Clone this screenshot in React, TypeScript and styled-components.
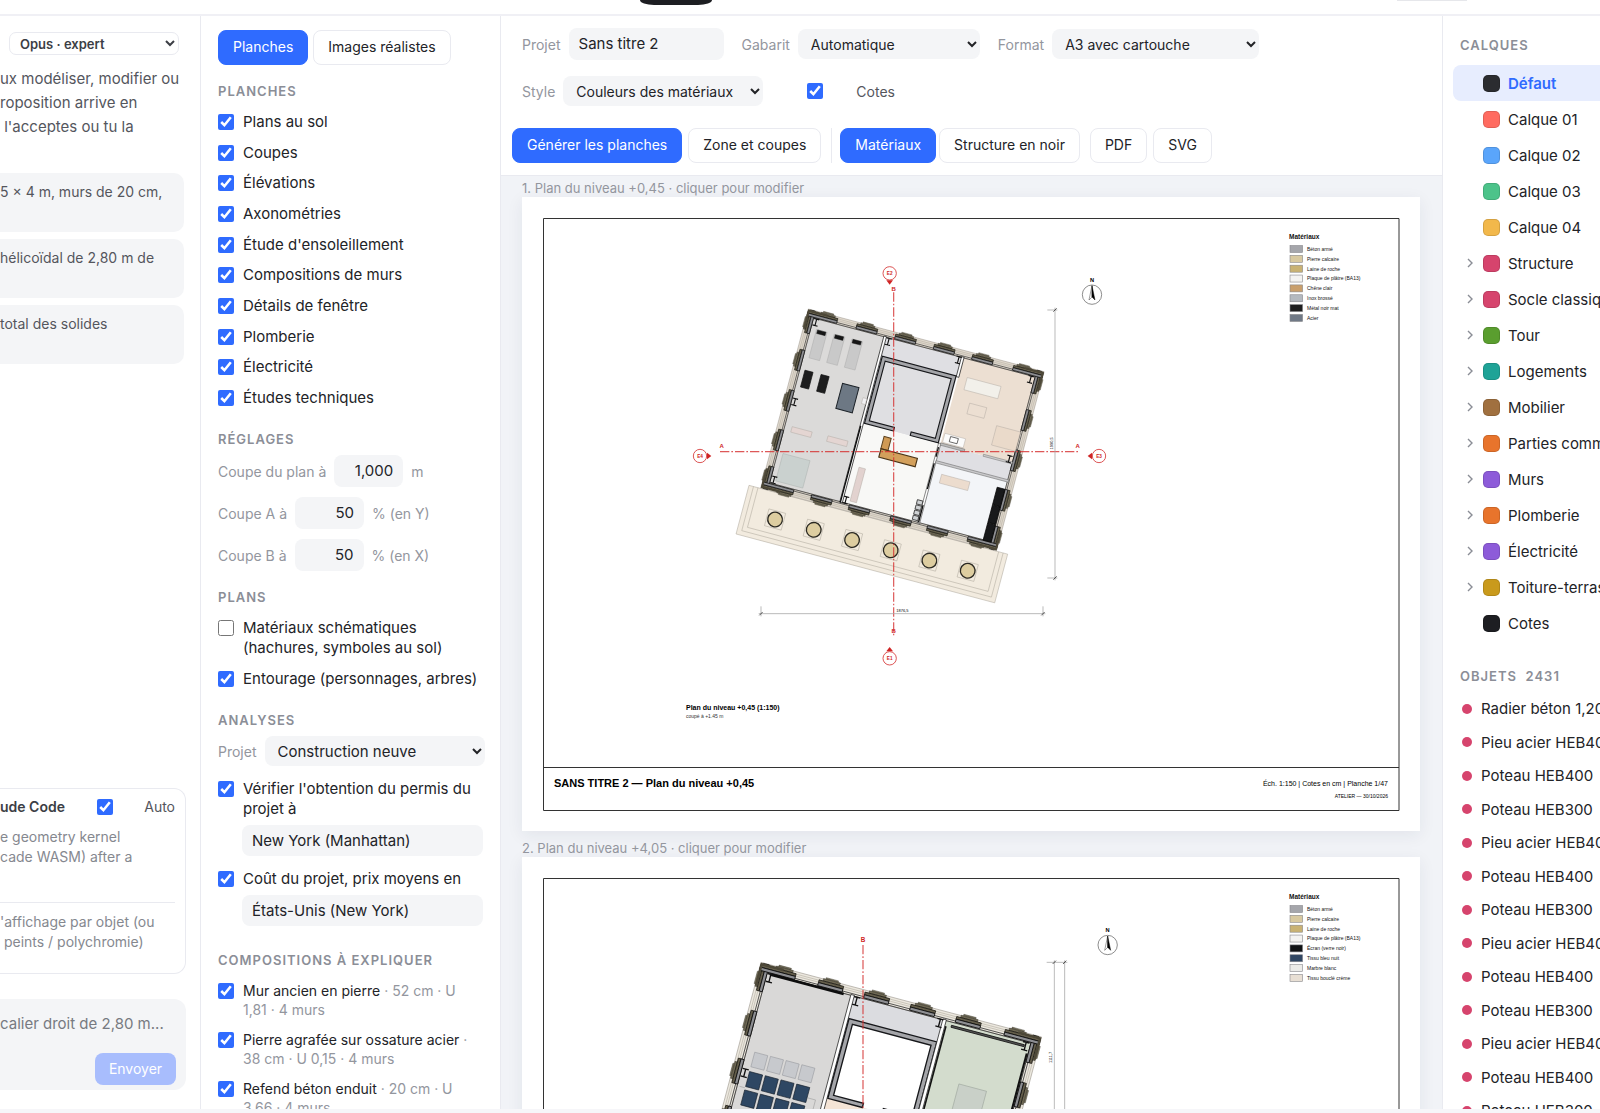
import React from "react";
import styled, { createGlobalStyle } from "styled-components";

const c = {
  blue: "#2f6bff",
  ink: "#222327",
  mid: "#54565d",
  mute: "#93969e",
  field: "#f4f5f7",
  line: "#e9eaf0",
  desk: "#f1f3f7",
};

const Global = createGlobalStyle`
  * { box-sizing: border-box; }
  body { margin: 0; background: #fff; }
  body, button, input, select, textarea { font-family: Inter, "Liberation Sans", sans-serif; }
`;

/* ---------- shell ---------- */

const Shell = styled.div`
  display: flex;
  flex-direction: column;
  height: 100vh;
  overflow: hidden;
  color: ${c.ink};
  font-size: 15px;
  border-bottom: 4px solid #f6f6f9;
`;

const TopBar = styled.header`
  display: flex;
  align-items: flex-start;
  height: 16px;
  padding: 0 133px 0 40%;
  border-bottom: 2px solid #f0f0f5;
  flex: none;
`;

const DarkPill = styled.span`
  width: 72px;
  height: 5px;
  border-radius: 0 0 14px 14px / 0 0 5px 5px;
  background: #1d1e22;
`;

const PalePill = styled.span`
  width: 70px;
  height: 1px;
  margin-left: auto;
  background: #e6e7eb;
`;

const Columns = styled.main`
  display: grid;
  grid-template-columns: 201px 300px minmax(0, 1fr) 157px;
  flex: 1;
  min-height: 0;
`;

const Column = styled.section`
  min-height: 0;
  overflow: hidden;
  border-right: 1px solid ${c.line};
`;

const Heading = styled.h2`
  margin: 18px 0 8px;
  font-size: 13px;
  line-height: 16px;
  font-weight: 600;
  letter-spacing: 1px;
  text-transform: uppercase;
  white-space: nowrap;
  color: #8b8e97;
`;

const Button = styled.button<{ $on?: boolean }>`
  height: 35px;
  padding: 0 14px 2px;
  border: 1px solid ${(p) => (p.$on ? c.blue : c.line)};
  border-radius: 8px;
  background: ${(p) => (p.$on ? c.blue : "#fff")};
  color: ${(p) => (p.$on ? "#fff" : c.ink)};
  font-size: 14px;
  white-space: nowrap;
`;

const Tick = styled.input.attrs({ type: "checkbox" })`
  flex: none;
  width: 16px;
  height: 16px;
  margin: 0;
  accent-color: ${c.blue};
`;

const Select = styled.select<{ $w: number; $small?: boolean }>`
  width: ${(p) => p.$w}px;
  height: 30px;
  padding: 0 0 0 9px;
  border: 0;
  border-radius: 8px;
  background-color: ${c.field};
  color: ${c.ink};
  font-size: ${(p) => (p.$small ? "14px" : "15px")};
`;

const TextField = styled.input<{ $w?: number; $end?: boolean }>`
  width: ${(p) => (p.$w ? p.$w + "px" : "100%")};
  height: 32px;
  padding: 0 10px 2px;
  border: 0;
  border-radius: 8px;
  background: ${c.field};
  color: ${c.ink};
  font-size: 15px;
  text-align: ${(p) => (p.$end ? "right" : "left")};
`;

/* ---------- assistant column ---------- */

const Assistant = styled(Column)`
  display: flex;
  flex-direction: column;
  padding: 16px 14px 19px 0;
  color: ${c.mid};
`;

const ModelSelect = styled.select`
  width: 170px;
  height: 23px;
  margin-left: 9px;
  padding: 0 0 0 6px;
  border: 1px solid ${c.line};
  border-radius: 7px;
  background-color: #fff;
  color: #3c3e45;
  font-size: 13px;
  font-weight: 600;
  flex: none;
`;

const Intro = styled.p`
  margin: 12px 0 34px;
  line-height: 24px;
  white-space: pre;
`;

const Examples = styled.div`
  display: grid;
  gap: 7px;
  margin-right: 2px;
`;

const Example = styled.button`
  display: flex;
  align-items: flex-start;
  height: 59px;
  padding: 10px 0;
  border: 0;
  border-radius: 0 10px 10px 0;
  background: ${c.field};
  color: ${c.mid};
  font-size: 14px;
  line-height: 18px;
  white-space: nowrap;
`;

const ToolCard = styled.div`
  height: 186px;
  margin-top: auto;
  padding: 8px 10px 0 0;
  border: 1px solid ${c.line};
  border-left: 0;
  border-radius: 0 12px 12px 0;
  font-size: 14px;
  line-height: 20px;
  flex: none;
`;

const ToolHead = styled.div`
  display: flex;
  align-items: center;
  justify-content: space-between;
  margin-bottom: 10px;
`;

const Strong = styled.strong`
  font-weight: 600;
  color: #3c3e45;
`;

const Note = styled.p<{ $rule?: boolean }>`
  margin: 0;
  height: ${(p) => (p.$rule ? "60px" : "75px")};
  padding-top: ${(p) => (p.$rule ? "9px" : "0")};
  border-top: ${(p) => (p.$rule ? `1px solid ${c.line}` : "0")};
  color: #85888f;
  white-space: pre;
`;

const Composer = styled.div`
  display: flex;
  flex-direction: column;
  align-items: flex-end;
  justify-content: space-between;
  height: 91px;
  margin-top: 25px;
  padding: 14px 10px 5px 0;
  border-radius: 0 12px 12px 0;
  background: ${c.field};
  flex: none;
`;

const Prompt = styled.input`
  width: 100%;
  padding: 0;
  border: 0;
  background: transparent;
  font-size: 15px;
  line-height: 22px;
  &::placeholder {
    color: #777a81;
  }
`;

const Send = styled.button`
  height: 32px;
  width: 81px;
  padding: 0 0 2px;
  border: 0;
  border-radius: 8px;
  background: #a8bdfd;
  color: #fff;
  font-size: 14px;
`;

/* ---------- settings column ---------- */

const Settings = styled(Column)`
  padding: 14px 14px 0 17px;
`;

const Tabs = styled.div`
  display: flex;
  gap: 5px;
`;

const CheckList = styled.div<{ $spread?: boolean }>`
  display: flex;
  flex-direction: column;
  justify-content: space-between;
  gap: ${(p) => (p.$spread ? "0" : "1px")};
  min-height: ${(p) => (p.$spread ? "306px" : "0")};
`;

const CheckRow = styled.label<{ $small?: boolean }>`
  display: flex;
  gap: 9px;
  padding: 5px ${(p) => (p.$small ? "6px" : "0")} 5px 0;
  font-size: ${(p) => (p.$small ? "14px" : "15px")};
  line-height: ${(p) => (p.$small ? "19px" : "20px")};
  & > input {
    margin-top: 2px;
  }
`;

const Detail = styled.span`
  color: ${c.mute};
`;

const Stack = styled.div`
  display: grid;
  gap: 10px;
`;

const Inline = styled.label`
  display: flex;
  align-items: center;
  gap: 8px;
  color: ${c.mute};
  font-size: 14px;
  white-space: nowrap;
`;

const Groups = styled.div`
  display: grid;
  gap: 8px;
  padding: 8px 0;
`;

const Indent = styled.div`
  margin-top: 1px;
  padding: 0 3px 0 24px;
  & > input {
    height: 31px;
    padding-bottom: 0;
  }
`;

/* ---------- sheets column ---------- */

const Sheets = styled(Column)`
  display: flex;
  flex-direction: column;
`;

const ToolArea = styled.div`
  display: grid;
  gap: 16px;
  padding: 12px 11px;
  border-bottom: 1px solid ${c.line};
  flex: none;
`;

const FieldRow = styled.div`
  display: flex;
  flex-wrap: wrap;
  gap: 16px 18px;
  padding: 0 10px;
`;

const CotesRow = styled.label`
  display: flex;
  align-items: center;
  gap: 33px;
  margin-left: 26px;
  color: ${c.mid};
  font-size: 14px;
`;

const ButtonRow = styled.div`
  display: flex;
  gap: 6px;
  padding-top: 6px;
`;

const Pair = styled.div`
  display: flex;
  gap: 3px;
  margin: 0 4px;
  padding-left: 8px;
  border-left: 1px solid ${c.line};
`;

const Desk = styled.div`
  flex: 1;
  min-height: 0;
  overflow: hidden;
  padding: 3px 22px 0 21px;
  background: ${c.desk};
`;

const Sheet = styled.figure`
  margin: 0 0 8px;
`;

const Caption = styled.figcaption`
  color: ${c.mute};
  font-size: 13px;
  line-height: 18px;
`;

const Paper = styled.svg`
  display: block;
  width: 100%;
  background: #fff;
  box-shadow: 0 4px 16px rgba(30, 40, 70, 0.07);
  font-family: "Liberation Sans", Arial, sans-serif;
`;

/* ---------- layers column ---------- */

const Layers = styled(Column)`
  border-right: 0;
  padding: 4px 0 0 10px;
`;

const SideHeading = styled(Heading)`
  padding-left: 7px;
  &:first-child {
    margin: 17px 0 12px;
  }
`;

const LayerList = styled.ul`
  margin: 0 0 27px;
  padding: 0;
  list-style: none;
`;

const Layer = styled.li<{ $on?: boolean }>`
  display: flex;
  align-items: center;
  gap: 8px;
  height: 36px;
  padding-left: 13px;
  border-radius: 8px 0 0 8px;
  background: ${(p) => (p.$on ? "#e7edfe" : "transparent")};
  color: ${(p) => (p.$on ? c.blue : c.ink)};
  font-weight: ${(p) => (p.$on ? 600 : 400)};
  white-space: nowrap;
`;

const Swatch = styled.span<{ $c: string }>`
  flex: none;
  width: 17px;
  height: 17px;
  border: 1px solid rgba(0, 0, 0, 0.12);
  border-radius: 5px;
  background: ${(p) => p.$c};
`;

const Chevron = styled.svg`
  flex: none;
  width: 9px;
  height: 10px;
  fill: none;
  stroke: #8a8d95;
  stroke-width: 1.4;
`;

const ObjectList = styled.ul`
  display: grid;
  grid-auto-rows: 1fr;
  min-height: 469px;
  margin: 0;
  padding: 0;
  list-style: none;
`;

const ObjectRow = styled.li`
  display: flex;
  align-items: center;
  gap: 9px;
  padding-left: 9px;
  white-space: nowrap;
  &::before {
    content: "";
    width: 10px;
    height: 10px;
    border-radius: 50%;
    background: #d6446d;
  }
`;

/* ---------- drawing ---------- */

type RectSpec = [number, number, number, number, string];

// rectangle given by its centre
const Box = ({ r, s = "#a9a39c", w = 1.2 }: { r: RectSpec; s?: string; w?: number }) => (
  <rect x={r[0] - r[2] / 2} y={r[1] - r[3] / 2} width={r[2]} height={r[3]} fill={r[4]} stroke={s} strokeWidth={w} />
);

const Pilaster = ({ at, turn, len = 64, shift = 0 }: { at: [number, number]; turn: number; len?: number; shift?: number }) => (
  <g transform={`translate(${at[0]} ${at[1]}) rotate(${turn})`}>
    <rect x={-16} y={-5} width={32} height={4} fill="#7a745f" stroke="#3a372c" strokeWidth="1" />
    <rect x={-22} y={-1} width={44} height={6} fill="#6f6954" stroke="#2a2820" strokeWidth="1" />
    <rect x={-len / 2 + shift} y={5} width={len} height={7} fill="#645e4b" stroke="#16150f" strokeWidth="1.8" />
    <rect x={-len / 2 + shift} y={12} width={len} height={8} fill="#8d8e92" stroke="#111" strokeWidth="2.2" />
  </g>
);

const Beam = ({ x, y }: { x: number; y: number }) => (
  <path d={`M${x - 8} ${y - 10}h16M${x - 8} ${y + 10}h16M${x} ${y - 10}v20`} stroke="#111" strokeWidth="3.4" fill="none" />
);

const TOPS = [185, 305, 425, 544];
const FOOTS = [185, 302, 431, 545];
const SIDES = [155, 280, 403];

const Envelope = ({ band }: { band: string }) => (
  <g>
    <path
      d="M0 0H732V556H0ZM22 22V534H710V22Z"
      fillRule="evenodd"
      fill={band}
      stroke="#8b867b"
      strokeWidth="1.2"
    />
    <path d="M6 6H726V550H6ZM11 11H721V545H11Z" fill="none" stroke="#a9a295" strokeWidth="1.2" />
    <path d="M17 17H715V539H17ZM22 22H710V534H22Z" fill="none" stroke="#2a2a2a" strokeWidth="1.8" />
    {TOPS.map((u) => <Pilaster key={u} at={[u, 0]} turn={0} />)}
    {FOOTS.map((u) => <Pilaster key={u} at={[u, 556]} turn={180} />)}
    {SIDES.map((v) => <Pilaster key={v} at={[2, v]} turn={-90} />)}
    {SIDES.map((v) => <Pilaster key={v} at={[730, v]} turn={90} />)}
    <Pilaster at={[2, 40]} turn={-90} len={70} shift={4} />
    <Pilaster at={[2, 516]} turn={-90} len={70} shift={-4} />
    <Pilaster at={[730, 40]} turn={90} len={70} shift={-4} />
    <Pilaster at={[730, 516]} turn={90} len={70} shift={4} />
    <Pilaster at={[62, 0]} turn={0} len={92} shift={-15} />
    <Pilaster at={[670, 0]} turn={0} len={92} shift={15} />
    <Pilaster at={[72, 556]} turn={180} len={96} shift={22} />
    <Pilaster at={[670, 556]} turn={180} len={92} shift={-15} />
    <path d="M3 60V4H60M672 4H729V60M3 496V552H60M672 552H729V496" fill="none" stroke="#4d4838" strokeWidth="6" />
  </g>
);

const Core = ({ floor }: { floor: string }) => (
  <g>
    <rect x={251} y={80} width={229} height={208} fill={floor} />
    <path
      d="M341 288H251V80H480V288H393V277H468V92H263V277H341Z"
      fill="#a4a5a9"
      stroke="#16171a"
      strokeWidth="3.4"
    />
  </g>
);

const Beams = () => (
  <g>
    <Beam x={32} y={33} />
    <Beam x={257} y={33} />
    <Beam x={474} y={32} />
    <Beam x={698} y={33} />
    <Beam x={32} y={280} />
    <Beam x={32} y={522} />
    <Beam x={698} y={280} />
    <Beam x={256} y={525} />
  </g>
);

const LevelOne = () => (
  <g>
    <g fill="#f2ebdf" stroke="#aaa498" strokeWidth="1.4">
      <rect x={-36} y={557} width={803} height={151} />
      <path d="M-22 557V694H753V557M-8 557V680H739V557" fill="none" />
    </g>
    {[66, 186, 305, 425, 545, 664].map((u) => (
      <g key={u}>
        <Box r={[u, 636, 52, 52, "none"]} s="#aaa498" w={1.4} />
        <circle cx={u} cy={636} r={22} fill="#ddcda0" stroke="#2b2922" strokeWidth="4" />
      </g>
    ))}
    <rect x={20} y={20} width={225} height={516} fill="#dbdad9" />
    <rect x={245} y={20} width={238} height={270} fill="#dfdfe3" />
    <rect x={245} y={288} width={238} height={248} fill="#f8f8f6" />
    <rect x={487} y={20} width={226} height={270} fill="#ecdfd2" />
    <rect x={487} y={290} width={226} height={54} fill="#dfdfe3" />
    <rect x={487} y={344} width={226} height={192} fill="#f3f5f8" />
    <Envelope band="#e0d9ce" />
    <rect x={240} y={20} width={8} height={516} fill="#fff" stroke="#111" strokeWidth="2" />
    <rect x={240} y={298} width={4} height={238} fill="#0c0c0c" />
    <rect x={481} y={20} width={8} height={62} fill="#fff" stroke="#111" strokeWidth="2" />
    <rect x={481} y={288} width={7} height={248} fill="#fff" stroke="#333" strokeWidth="1.6" />
    <path d="M484 300v30M484 350v80M484 480v54" stroke="#111" strokeWidth="4" />
    <Core floor="#dfdfe2" />
    <rect x={487} y={286} width={75} height={7} fill="#bbb" stroke="#666" strokeWidth="1.5" />
    <rect x={620} y={286} width={90} height={6} fill="#ccc" stroke="#777" strokeWidth="1.5" />
    <rect x={487} y={341} width={226} height={7} fill="#c9c9cb" stroke="#666" strokeWidth="1.5" />
    {[56, 111, 166].map((u) => (
      <g key={u}>
        <Box r={[u, 97, 33, 88, "#c9c9c9"]} s="#a5a5a5" />
        <Box r={[u, 59, 26, 11, "#161616"]} s="#161616" />
      </g>
    ))}
    <Box r={[50, 206, 25, 52, "#1d1d1e"]} s="#111" w={2} />
    <Box r={[100, 206, 25, 52, "#1d1d1e"]} s="#111" w={2} />
    <Box r={[182, 228, 51, 78, "#6d7884"]} s="#1c2228" w={3} />
    <Box r={[233, 224, 12, 18, "#f2f2f4"]} />
    <Box r={[75, 362, 62, 17, "#e4d5d2"]} />
    <Box r={[186, 361, 62, 17, "#e4d5d2"]} />
    <Box r={[80, 481, 84, 85, "#cad1cf"]} s="#a3aaa8" />
    <Box r={[329, 330, 22, 38, "#cf9a55"]} s="#5a3f1c" w={3} />
    <Box r={[375, 362, 113, 26, "#d3a05c"]} s="#4a3417" w={3.4} />
    <Box r={[279, 472, 20, 105, "#e2d2cf"]} />
    {[475, 491, 507, 523].map((v) => <Box key={v} r={[472, v, 17, 13, "#cfd2d4"]} s="#333" w={2.4} />)}
    <Box r={[566, 95, 105, 38, "#f2f0ea"]} />
    <Box r={[567, 165, 53, 33, "#ecdfd2"]} />
    <Box r={[673, 223, 74, 60, "#eadaca"]} />
    <Box r={[524, 269, 64, 28, "#fbfbfb"]} />
    <Box r={[523, 268, 24, 16, "#fff"]} s="#333" w={2} />
    <Box r={[558, 390, 88, 27, "#ecdcce"]} />
    {[398, 453, 508].map((v) => <Box key={v} r={[697, v, 24, 54, "#18191b"]} s="#000" w={2} />)}
    <Beams />
  </g>
);

const LevelTwo = () => (
  <g>
    <rect x={20} y={20} width={225} height={516} fill="#d9d8d7" />
    <rect x={245} y={20} width={238} height={270} fill="#dbdce0" />
    <rect x={245} y={288} width={238} height={248} fill="#f4e4d6" />
    <rect x={487} y={20} width={226} height={516} fill="#d3dccd" />
    <Envelope band="#ece8df" />
    <rect x={30} y={20} width={192} height={7} fill="#0d0d0d" />
    <rect x={240} y={20} width={9} height={516} fill="#fff" stroke="#222" strokeWidth="1.8" />
    <Core floor="#fff" />
    <rect x={480} y={20} width={9} height={516} fill="#fff" stroke="#222" strokeWidth="1.8" />
    <rect x={490} y={36} width={4} height={500} fill="#111" />
    <rect x={505} y={30} width={190} height={5} fill="#555" stroke="#111" strokeWidth="2" />
    <rect x={704} y={50} width={5} height={480} fill="#111" />
    {[60, 101, 142, 183].map((u) => (
      <g key={u}>
        <Box r={[u, 242, 34, 38, "#c7c9cd"]} s="#8f9196" />
        <Box r={[u, 293, 34, 39, "#2e4763"]} s="#16202c" w={1.6} />
        <Box r={[u, 341, 34, 39, "#2e4763"]} s="#16202c" w={1.6} />
      </g>
    ))}
    <path d="M28 316H42M202 300H222V380" fill="none" stroke="#9b9b9b" strokeWidth="1.4" />
    <rect x={561} y={168} width={72} height={80} fill="#c9d0c8" stroke="#9aa39a" strokeWidth="1.4" />
    <Beams />
  </g>
);

const North = ({ x, y }: { x: number; y: number }) => (
  <g>
    <text x={x} y={y - 39} fontSize="17" fontWeight="700" textAnchor="middle">N</text>
    <circle cx={x} cy={y} r={29} fill="#fff" stroke="#555" strokeWidth="2" />
    <path d={`M${x} ${y - 27}L${x - 9} ${y + 16}L${x} ${y + 7}Z`} fill="#fff" stroke="#333" strokeWidth="1.4" />
    <path d={`M${x} ${y - 27}L${x + 9} ${y + 16}L${x} ${y + 7}Z`} fill="#000" stroke="#000" strokeWidth="1.4" />
  </g>
);

const Mark = ({ x, y, turn, name }: { x: number; y: number; turn: number; name: string }) => (
  <g fill="#cf2424">
    <circle cx={x} cy={y} r={20} fill="#fff" stroke="#d63a3a" strokeWidth="2.6" />
    <path d="M-10 21H10L0 34Z" transform={`translate(${x} ${y}) rotate(${turn})`} />
    <text x={x} y={y + 5} fontSize="14" fontWeight="700" textAnchor="middle">{name}</text>
  </g>
);

const RED = { stroke: "#d62f2f", strokeWidth: 3.6, strokeDasharray: "28 6 5 6", opacity: 0.8 };

type Mat = [string, string];

const Legend = ({ y, items }: { y: number; items: Mat[] }) => (
  <g fill="#111">
    <text x={1289} y={y + 2} fontSize="6.5" fontWeight="700">Matériaux</text>
    {items.map(([name, fill], i) => (
      <g key={name} transform={`translate(1290 ${y + 12 + i * 9.85})`}>
        <rect y={-3.5} width={12.6} height={7} fill={fill} stroke="#88888c" strokeWidth=".6" />
        <text x={17} y={1.8} fontSize="5">{name}</text>
      </g>
    ))}
  </g>
);

const Frame = ({ y, title }: { y: number; title: string }) => (
  <g>
    <path d={`M543.5 ${y + 21.5}H1399V${y + 613.5}H543.5ZM543.5 ${y + 570.5}H1399`} fill="none" stroke="#333" strokeWidth="1" />
    <text x={554} y={y + 590} fontSize="11" fontWeight="700">{title}</text>
  </g>
);

const MATS_ONE: Mat[] = [
  ["Béton armé", "#a5a6ab"], ["Pierre calcaire", "#d8c9a0"], ["Laine de roche", "#c9b273"],
  ["Plaque de plâtre (BA13)", "#f4f3f1"], ["Chêne clair", "#c99f6c"], ["Inox brossé", "#b4b9bf"],
  ["Métal noir mat", "#1f1f20"], ["Acier", "#707986"],
];

const MATS_TWO: Mat[] = [
  ["Béton armé", "#a5a6ab"], ["Pierre calcaire", "#d8c9a0"], ["Laine de roche", "#c9b273"],
  ["Plaque de plâtre (BA13)", "#f4f3f1"], ["Écran (verre noir)", "#101214"], ["Tissu bleu nuit", "#314763"],
  ["Marbre blanc", "#ebebe8"], ["Tissu bouclé crème", "#e8dfd4"],
];

const SheetOne = () => (
  <Paper viewBox="522 198 898 634" role="img" aria-label="Plan du niveau +0,45">
    <Frame y={198} title="SANS TITRE 2 — Plan du niveau +0,45" />
    <text x={1388} y={787} fontSize="7" textAnchor="end">Éch. 1:150 | Cotes en cm | Planche 1/47</text>
    <text x={1388} y={799} fontSize="5" textAnchor="end">ATELIER — 30/10/2026</text>
    <text x={686} y={711} fontSize="7" fontWeight="700">Plan du niveau +0,45 (1:150)</text>
    <text x={686} y={719} fontSize="5" fill="#333">coupé à +1.45 m</text>
    <Legend y={238} items={MATS_ONE} />
    <g transform="translate(670 250) scale(.33333)">
      <g transform="translate(415 180) rotate(14.9)"><LevelOne /></g>
      <path d="M150 608H1226" {...RED} />
      <path d="M671 130V1165" {...RED} />
      <g fill="#cf2424" fontSize="18" fontWeight="700" textAnchor="middle">
        <text x={155} y={598}>A</text>
        <text x={1223} y={598}>A</text>
        <text x={671} y={126}>B</text>
        <text x={671} y={1153}>B</text>
      </g>
      <Mark x={659} y={73} turn={0} name="E2" />
      <Mark x={659} y={1228} turn={180} name="E1" />
      <Mark x={90} y={621} turn={-90} name="E4" />
      <Mark x={1287} y={621} turn={90} name="E3" />
      <North x={1266} y={137} />
      <g stroke="#aaa" strokeWidth="2.4" fill="none">
        <path d="M266 1094H1126M273 1072V1102M1119 1072V1102" />
        <path d="M1155 176V994M1132 183H1162M1132 987H1162" />
        <path d="M268 1099l10-10M1114 1099l10-10M1150 188l10-10M1150 992l10-10" stroke="#333" />
      </g>
      <text x={697} y={1089} fontSize="12" textAnchor="middle">1876,5</text>
      <text transform="translate(1150 583) rotate(-90)" fontSize="12" textAnchor="middle">1990,5</text>
    </g>
  </Paper>
);

const SheetTwo = () => (
  <Paper viewBox="522 858 898 634" role="img" aria-label="Plan du niveau +4,05">
    <Frame y={858} title="SANS TITRE 2 — Plan du niveau +4,05" />
    <Legend y={898} items={MATS_TWO} />
    <g transform="translate(680 900) scale(.33333)">
      <g transform="translate(243 190) rotate(14.9) scale(1.19)"><LevelTwo /></g>
      <path d="M549 138V1300" {...RED} />
      <text x={549} y={128} fontSize="19" fontWeight="700" fill="#cf2424" textAnchor="middle">B</text>
      <North x={1283} y={138} />
      <g stroke="#aaa" strokeWidth="2.4" fill="none">
        <path d="M1123 184V1200M1154 184V1200M1100 190H1162" />
        <path d="M1118 195l10-10M1149 195l10-10" stroke="#333" />
      </g>
      <text transform="translate(1117 475) rotate(-90)" fontSize="12" textAnchor="middle">1111,7</text>
    </g>
  </Paper>
);

/* ---------- data ---------- */

const PLANCHES = [
  "Plans au sol", "Coupes", "Élévations", "Axonométries", "Étude d'ensoleillement",
  "Compositions de murs", "Détails de fenêtre", "Plomberie", "Électricité", "Études techniques",
];

const COUPES = [
  ["Coupe du plan à", "1,000", "m"],
  ["Coupe A à", "50", "% (en Y)"],
  ["Coupe B à", "50", "% (en X)"],
];

const MURS = [
  ["Mur ancien en pierre", "52 cm · U 1,81 · 4 murs"],
  ["Pierre agrafée sur ossature acier", "38 cm · U 0,15 · 4 murs"],
  ["Refend béton enduit", "20 cm · U 3,66 · 4 murs"],
];

const CALQUES: [string, string, boolean][] = [
  ["Défaut", "#2b2c30", false], ["Calque 01", "#ff6b60", false], ["Calque 02", "#5aa5fb", false],
  ["Calque 03", "#4cc38a", false], ["Calque 04", "#f2b84b", false], ["Structure", "#d6446d", true],
  ["Socle classique", "#d6446d", true], ["Tour", "#5a9e2f", true], ["Logements", "#1fa397", true],
  ["Mobilier", "#a0703f", true], ["Parties communes", "#e8742c", true], ["Murs", "#8d5bd9", true],
  ["Plomberie", "#e8742c", true], ["Électricité", "#8d5bd9", true], ["Toiture-terrasse", "#c99a1c", true],
  ["Cotes", "#1d1e22", false],
];

const OBJETS = [
  "Radier béton 1,20 m", "Pieu acier HEB400", "Poteau HEB400", "Poteau HEB300", "Pieu acier HEB400",
  "Poteau HEB400", "Poteau HEB300", "Pieu acier HEB400", "Poteau HEB400", "Poteau HEB300",
  "Pieu acier HEB400", "Poteau HEB400", "Poteau HEB300", "Pieu acier HEB400",
];

export default function App() {
  return (
    <>
      <Global />
      <Shell>
        <TopBar>
          <DarkPill />
          <PalePill />
        </TopBar>
        <Columns>
          <Assistant>
            <ModelSelect aria-label="Modèle">
              <option>Opus · expert</option>
            </ModelSelect>
            <Intro>{"ux modéliser, modifier ou\nroposition arrive en\n l'acceptes ou tu la"}</Intro>
            <Examples>
              <Example>5 × 4 m, murs de 20 cm,</Example>
              <Example>hélicoïdal de 2,80 m de</Example>
              <Example>total des solides</Example>
            </Examples>
            <ToolCard>
              <ToolHead>
                <Strong>ude Code</Strong>
                <Tick defaultChecked id="auto" />
                <label htmlFor="auto">Auto</label>
              </ToolHead>
              <Note>{"e geometry kernel\ncade WASM) after a"}</Note>
              <Note $rule>{"'affichage par objet (ou\n peints / polychromie)"}</Note>
            </ToolCard>
            <Composer>
              <Prompt aria-label="Message" placeholder="calier droit de 2,80 m..." />
              <Send>Envoyer</Send>
            </Composer>
          </Assistant>

          <Settings>
            <Tabs>
              <Button $on>Planches</Button>
              <Button>Images réalistes</Button>
            </Tabs>
            <Heading>Planches</Heading>
            <CheckList $spread>
              {PLANCHES.map((name) => (
                <CheckRow key={name}>
                  <Tick defaultChecked />
                  <span>{name}</span>
                </CheckRow>
              ))}
            </CheckList>
            <Heading>Réglages</Heading>
            <Stack>
              {COUPES.map(([name, value, unit]) => (
                <Inline key={name}>
                  {name}
                  <TextField $w={69} $end defaultValue={value} />
                  {unit}
                </Inline>
              ))}
            </Stack>
            <Heading>Plans</Heading>
            <CheckList>
              <CheckRow>
                <Tick />
                <span>Matériaux schématiques (hachures, symboles au sol)</span>
              </CheckRow>
              <CheckRow>
                <Tick defaultChecked />
                <span>Entourage (personnages, arbres)</span>
              </CheckRow>
            </CheckList>
            <Heading>Analyses</Heading>
            <Inline>
              Projet
              <Select $w={220}>
                <option>Construction neuve</option>
              </Select>
            </Inline>
            <Groups>
              <div>
                <CheckRow>
                  <Tick defaultChecked />
                  <span>Vérifier l'obtention du permis du projet à</span>
                </CheckRow>
                <Indent>
                  <TextField aria-label="Ville du permis" defaultValue="New York (Manhattan)" />
                </Indent>
              </div>
              <div>
                <CheckRow>
                  <Tick defaultChecked />
                  <span>Coût du projet, prix moyens en</span>
                </CheckRow>
                <Indent>
                  <TextField aria-label="Pays des prix" defaultValue="États-Unis (New York)" />
                </Indent>
              </div>
            </Groups>
            <Heading>Compositions à expliquer</Heading>
            <CheckList>
              {MURS.map(([name, detail]) => (
                <CheckRow key={name} $small>
                  <Tick defaultChecked />
                  <span>
                    {name} <Detail>· {detail}</Detail>
                  </span>
                </CheckRow>
              ))}
            </CheckList>
          </Settings>

          <Sheets>
            <ToolArea>
              <FieldRow>
                <Inline>
                  Projet
                  <TextField $w={155} defaultValue="Sans titre 2" />
                </Inline>
                <Inline>
                  Gabarit
                  <Select $small $w={182}>
                    <option>Automatique</option>
                  </Select>
                </Inline>
                <Inline>
                  Format
                  <Select $small $w={207}>
                    <option>A3 avec cartouche</option>
                  </Select>
                </Inline>
              </FieldRow>
              <FieldRow>
                <Inline>
                  Style
                  <Select $small $w={200}>
                    <option>Couleurs des matériaux</option>
                  </Select>
                </Inline>
                <CotesRow>
                  <Tick defaultChecked />
                  Cotes
                </CotesRow>
              </FieldRow>
              <ButtonRow>
                <Button $on>Générer les planches</Button>
                <Button>Zone et coupes</Button>
                <Pair>
                  <Button $on>Matériaux</Button>
                  <Button>Structure en noir</Button>
                </Pair>
                <Button>PDF</Button>
                <Button>SVG</Button>
              </ButtonRow>
            </ToolArea>
            <Desk>
              <Sheet>
                <Caption>1. Plan du niveau +0,45 · cliquer pour modifier</Caption>
                <SheetOne />
              </Sheet>
              <Sheet>
                <Caption>2. Plan du niveau +4,05 · cliquer pour modifier</Caption>
                <SheetTwo />
              </Sheet>
            </Desk>
          </Sheets>

          <Layers>
            <SideHeading>Calques</SideHeading>
            <LayerList>
              {CALQUES.map(([name, color, nested], i) => (
                <Layer key={name} $on={i === 0}>
                  <Chevron viewBox="0 0 9 10">{nested && <path d="M2 1l4 4-4 4" />}</Chevron>
                  <Swatch $c={color} />
                  {name}
                </Layer>
              ))}
            </LayerList>
            <SideHeading>Objets&nbsp; 2431</SideHeading>
            <ObjectList>
              {OBJETS.map((name, i) => (
                <ObjectRow key={i}>{name}</ObjectRow>
              ))}
            </ObjectList>
          </Layers>
        </Columns>
      </Shell>
    </>
  );
}
